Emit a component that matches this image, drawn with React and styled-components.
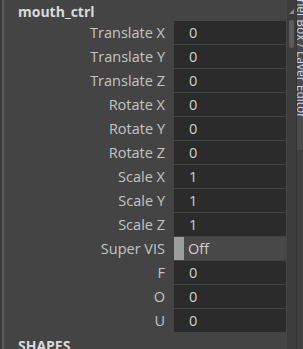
import styled, { createGlobalStyle } from 'styled-components';

const Global = createGlobalStyle`
	html, body {
		margin: 0;
		padding: 0;
		background: #444444;
		overflow: hidden;
	}
	body {
		font-family: "Open Sans", "Noto Sans", sans-serif;
	}
`;

const Window = styled.div`
	display: flex;
	width: 303px;
	height: 349px;
	overflow: hidden;
	background: #444444;
`;

const LeftEdge = styled.div`
	flex: none;
	width: 4px;
	display: flex;
	background: #3a3a3a;

	&::after {
		content: '';
		margin-left: 2px;
		width: 2px;
		background: #5a5a5a;
	}
`;

const Panel = styled.div`
	flex: none;
	width: 283px;
	display: flex;
	flex-direction: column;
`;

const SectionTitle = styled.div`
	height: 26px;
	padding-left: 14px;
	display: flex;
	align-items: center;
	padding-top: 2px;
	box-sizing: border-box;
	font-size: 14px;
	font-weight: 700;
	color: #dadada;
`;

const Rows = styled.div`
	display: flex;
	flex-direction: column;
	gap: 1px;
`;

const Row = styled.div`
	display: grid;
	grid-template-columns: 161px 112px;
	column-gap: 9px;
	height: 23px;
	align-items: center;
`;

const Label = styled.div`
	text-align: right;
	font-size: 14.5px;
	color: #c4c4c4;
	white-space: nowrap;
`;

const Field = styled.div`
	height: 23px;
	display: flex;
	align-items: center;
	background: ${p => (p.$toggle ? '#484848' : '#2b2b2b')};
	color: #d0d0d0;
	font-size: 14.5px;
	padding-left: ${p => (p.$toggle ? '0' : '15px')};
	box-sizing: border-box;
`;

const Check = styled.div`
	width: 10px;
	height: 100%;
	background: #9d9d9d;
	margin-right: 4px;
`;

const Footer = styled.div`
	margin-top: 4px;
	padding-left: 14px;
	font-size: 14px;
	font-weight: 700;
	color: #dadada;
`;

const ScrollTrack = styled.div`
	flex: none;
	width: 9px;
	background: #3c3c3c;
	display: flex;
	flex-direction: column;
	align-items: center;
	padding-top: 9px;
	box-sizing: border-box;
`;

const Thumb = styled.div`
	width: 5px;
	height: 28px;
	margin-top: 6px;
	border-radius: 3px;
	background: #5c5c5c;
`;

const SideTab = styled.div`
	flex: none;
	width: 7px;
	display: flex;
	flex-direction: column;
	border-left: 1px solid #343434;
	background: #3f3f3f;
`;

const TabFace = styled.div`
	height: 150px;
	background: #4a4a4a;
	overflow: hidden;
	position: relative;
`;

const TabText = styled.div`
	position: absolute;
	top: -30px;
	left: -4px;
	writing-mode: vertical-rl;
	font-size: 12px;
	color: #c8d4ea;
	white-space: nowrap;
	font-family: "Open Sans", sans-serif;
`;

const attrs = [
	['Translate X', '0'],
	['Translate Y', '0'],
	['Translate Z', '0'],
	['Rotate X', '0'],
	['Rotate Y', '0'],
	['Rotate Z', '0'],
	['Scale X', '1'],
	['Scale Y', '1'],
	['Scale Z', '1'],
	['Super VIS', 'Off', true],
	['F', '0'],
	['O', '0'],
	['U', '0'],
];

export default function App() {
	return (
		<Window>
			<Global />
			<LeftEdge />
			<Panel>
				<SectionTitle>mouth_ctrl</SectionTitle>
				<Rows>
					{attrs.map(([name, value, toggle]) => (
						<Row key={name}>
							<Label>{name}</Label>
							<Field $toggle={toggle}>
								{toggle && <Check />}
								{value}
							</Field>
						</Row>
					))}
				</Rows>
				<Footer>SHAPES</Footer>
			</Panel>
			<ScrollTrack>
				<svg width="5" height="5" viewBox="0 0 5 5">
					<path d="M5 0 L5 5 L0 5 Z" fill="#8a8a8a" />
				</svg>
				<Thumb />
			</ScrollTrack>
			<SideTab>
				<TabFace>
					<TabText>Channel Box / Layer Editor</TabText>
				</TabFace>
			</SideTab>
		</Window>
	);
}
